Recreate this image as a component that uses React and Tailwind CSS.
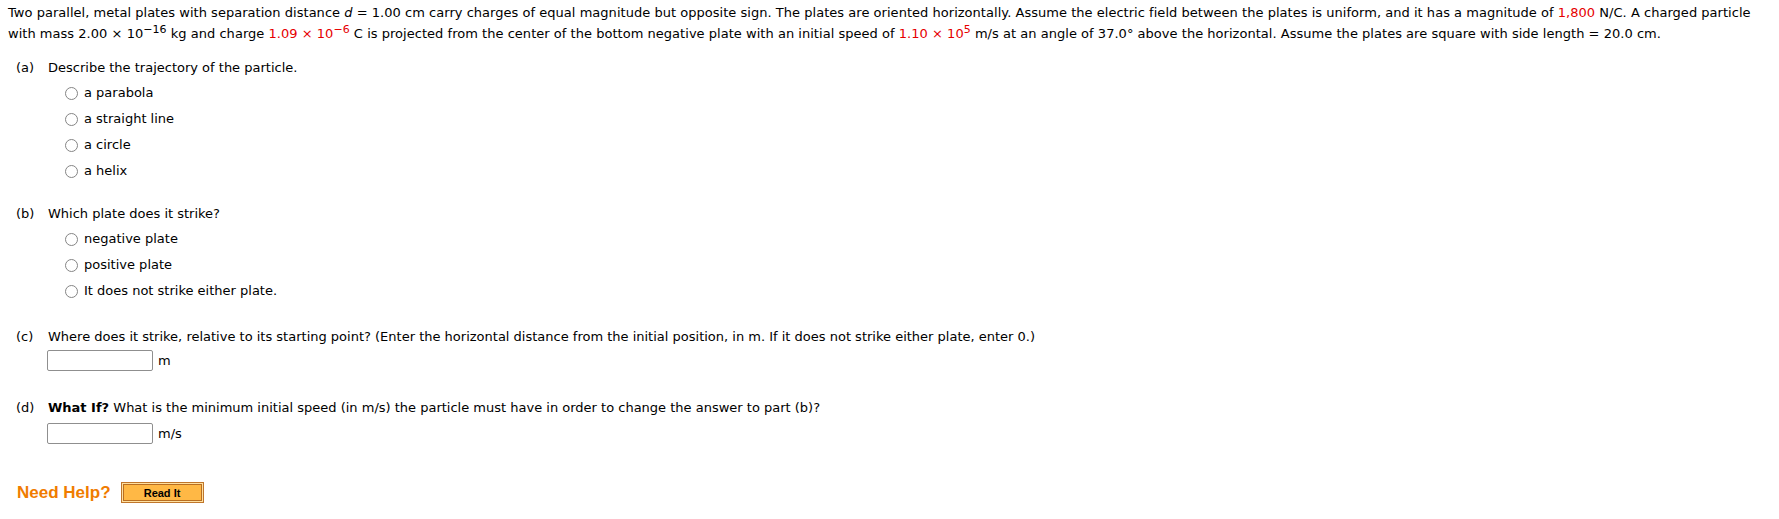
import React, { useState } from 'react';

const Red = ({ children }) => <span className="text-[#e60000]">{children}</span>;

const Sup = ({ children }) => (
  <sup className="text-[11px] top-[-0.5em]">{children}</sup>
);

const Radio = ({ label, value, checked, onChange }) => (
  <label className="flex items-center h-[26px] pl-[25px] cursor-pointer">
    <span
      onClick={() => onChange(value)}
      className="w-[13px] h-[13px] rounded-full border border-[#858585] bg-white flex items-center justify-center"
    >
      {checked && <span className="w-[7px] h-[7px] rounded-full bg-[#333]" />}
    </span>
    <span className="ml-[6px]">{label}</span>
  </label>
);

const PartLabel = ({ letter, children, className = '' }) => (
  <div className={`flex items-center h-[24px] pl-2 ${className}`}>
    <span className="w-[32px]">({letter})</span>
    <span>{children}</span>
  </div>
);

const AnswerBox = ({ unit, value, onChange, className = '' }) => (
  <div className={`flex items-center pl-[39px] ${className}`}>
    <input
      type="text"
      value={value}
      onChange={(e) => onChange(e.target.value)}
      className="w-[106px] h-[21px] border border-[#8f8f8f] rounded-[2px] bg-white px-1 text-[13px] outline-none"
    />
    <span className="ml-[5px]">{unit}</span>
  </div>
);

const App = () => {
  const [answers, setAnswers] = useState({ a: '', b: '', c: '', d: '' });

  const trajectoryOptions = ['a parabola', 'a straight line', 'a circle', 'a helix'];
  const plateOptions = ['negative plate', 'positive plate', 'It does not strike either plate.'];

  return (
    <div className="min-h-screen bg-white text-black text-[13px] font-[Verdana,'DejaVu_Sans',sans-serif] px-2 pt-[2px]">
      <p className="leading-[21px] whitespace-nowrap tracking-[0.03px]">
        Two parallel, metal plates with separation distance <i>d</i> = 1.00 cm carry charges of equal magnitude but
        opposite sign. The plates are oriented horizontally. Assume the electric field between the plates is uniform,
        and it has a magnitude of <Red>1,800</Red> N/C. A charged particle
        <br />
        with mass 2.00 &times; 10<Sup>&minus;16</Sup> kg and charge <Red>1.09 &times; 10<Sup>&minus;6</Sup></Red> C is
        projected from the center of the bottom negative plate with an initial speed of{' '}
        <Red>1.10 &times; 10<Sup>5</Sup></Red> m/s at an angle of 37.0&deg; above the horizontal. Assume the plates are
        square with side length = 20.0 cm.
      </p>

      <PartLabel letter="a" className="mt-[12px]">Describe the trajectory of the particle.</PartLabel>
      <div className="pl-[32px]">
        {trajectoryOptions.map(opt => (
          <Radio
            key={opt}
            label={opt}
            value={opt}
            checked={answers.a === opt}
            onChange={(v) => setAnswers({ ...answers, a: v })}
          />
        ))}
      </div>

      <PartLabel letter="b" className="mt-[18px]">Which plate does it strike?</PartLabel>
      <div className="pl-[32px]">
        {plateOptions.map(opt => (
          <Radio
            key={opt}
            label={opt}
            value={opt}
            checked={answers.b === opt}
            onChange={(v) => setAnswers({ ...answers, b: v })}
          />
        ))}
      </div>

      <PartLabel letter="c" className="mt-[21px]">
        Where does it strike, relative to its starting point? (Enter the horizontal distance from the initial position,
        in m. If it does not strike either plate, enter 0.)
      </PartLabel>
      <AnswerBox
        unit="m"
        value={answers.c}
        onChange={(v) => setAnswers({ ...answers, c: v })}
        className="mt-[1px]"
      />

      <PartLabel letter="d" className="mt-[25px]">
        <b>What If?</b> What is the minimum initial speed (in m/s) the particle must have in order to change the answer
        to part (b)?
      </PartLabel>
      <AnswerBox
        unit="m/s"
        value={answers.d}
        onChange={(v) => setAnswers({ ...answers, d: v })}
        className="mt-[3px]"
      />

      <div className="flex items-center mt-[36px] pl-[9px]">
        <span className="font-['Liberation_Sans',Arial,sans-serif] font-bold text-[17px] text-[#f07c00]">
          Need Help?
        </span>
        <button className="ml-[10px] w-[83px] h-[21px] border border-[#c0762b] bg-[#ffe0a0] p-[1px]">
          <span className="flex items-center justify-center w-full h-full border border-[#b86e22] bg-[#ffb845] font-['Liberation_Sans',Arial,sans-serif] font-bold text-[11px] text-black">
            Read It
          </span>
        </button>
      </div>
    </div>
  );
};

export default App;
